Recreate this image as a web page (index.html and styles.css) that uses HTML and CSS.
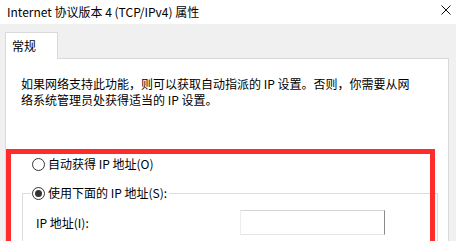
FILE: index.html
```html
<!DOCTYPE html>
<html lang="zh-CN">
<head>
<meta charset="utf-8">
<title>Internet 协议版本 4 (TCP/IPv4) 属性</title>
<link rel="stylesheet" href="styles.css">
</head>
<body>
<div class="window">
  <div class="titlebar">
    <span class="title">Internet 协议版本 4 (TCP/IPv4) 属性</span>
    <svg class="close" width="10" height="10" viewBox="0 0 10 10"><path d="M0.5 0.5 L9.5 9.5 M9.5 0.5 L0.5 9.5" stroke="#111" stroke-width="1" fill="none"/></svg>
  </div>
  <div class="client">
    <div class="tabs"><div class="tab">常规</div></div>
    <div class="panel">
      <p class="desc">如果网络支持此功能，则可以获取自动指派的 IP 设置。否则，你需要从网<br>络系统管理员处获得适当的 IP 设置。</p>
      <label class="option"><span class="radio"></span>自动获得 IP 地址(O)</label>
      <fieldset class="group">
        <legend class="option legend"><span class="radio checked"></span>使用下面的 IP 地址(S):</legend>
        <div class="ip-row">
          <span class="ip-label">IP 地址(I):</span>
          <span class="ipbox"></span>
        </div>
      </fieldset>
      <div class="highlight"></div>
    </div>
  </div>
</div>
</body>
</html>
```

FILE: styles.css
```css
html, body {
  margin: 0;
  padding: 0;
}
body {
  width: 456px;
  height: 241px;
  overflow: hidden;
  background: #f0f0f0;
  font-family: "Noto Sans CJK SC", "Noto Sans", sans-serif;
  font-size: 12px;
  color: #000;
}
.window {
  display: flex;
  flex-direction: column;
}
.titlebar {
  height: 24px;
  background: #fff;
  display: flex;
  align-items: center;
  padding-left: 7px;
  padding-right: 5px;
  justify-content: space-between;
  line-height: 16px;
}
.close {
  display: block;
  margin-top: -4px;
}
.client {
  padding: 8px 7px 0 5px;
}
.tabs {
  display: flex;
}
.tab {
  position: relative;
  z-index: 2;
  width: 45px;
  height: 16px;
  line-height: 16px;
  padding: 5px 0 5px 6px;
  background: #fff;
  border: 1px solid #d9d9d9;
  border-bottom: none;
  margin-bottom: -1px;
}
.panel {
  position: relative;
  background: #fff;
  border: 1px solid #d9d9d9;
  height: 240px;
  padding-top: 17px;
  box-sizing: border-box;
}
.desc {
  margin: 0 0 0 15px;
  line-height: 16px;
  white-space: nowrap;
}
.option {
  display: flex;
  align-items: center;
  height: 16px;
  line-height: 16px;
  margin: 48px 0 0 26px;
}
.radio {
  width: 11px;
  height: 11px;
  border: 1px solid #333;
  border-radius: 50%;
  margin-right: 3px;
  display: flex;
  align-items: center;
  justify-content: center;
  flex: none;
}
.radio.checked::after {
  content: "";
  width: 7px;
  height: 7px;
  border-radius: 50%;
  background: #333;
}
.group {
  margin: 13px 10px 0 16px;
  padding: 0 0 40px 8px;
  border: 1px solid #dcdcdc;
  border-bottom: none;
}
.legend {
  margin: 0;
  padding: 0 2px 0 1px;
  background: #fff;
}
.ip-row {
  display: flex;
  align-items: center;
  height: 25px;
  margin: 9px 0 0 5px;
}
.ip-label {
  width: 204px;
  line-height: 16px;
}
.ipbox {
  width: 143px;
  height: 23px;
  border-top: 1px solid #d6d6d0;
  border-left: 1px solid #ececec;
  border-bottom: 1px solid #e4e4e0;
  border-right: 1px solid #8a8a8a;
}
.highlight {
  position: absolute;
  left: 0;
  top: 90px;
  width: 419px;
  height: 130px;
  border: 5px solid #fe2c2a;
  pointer-events: none;
}
```
